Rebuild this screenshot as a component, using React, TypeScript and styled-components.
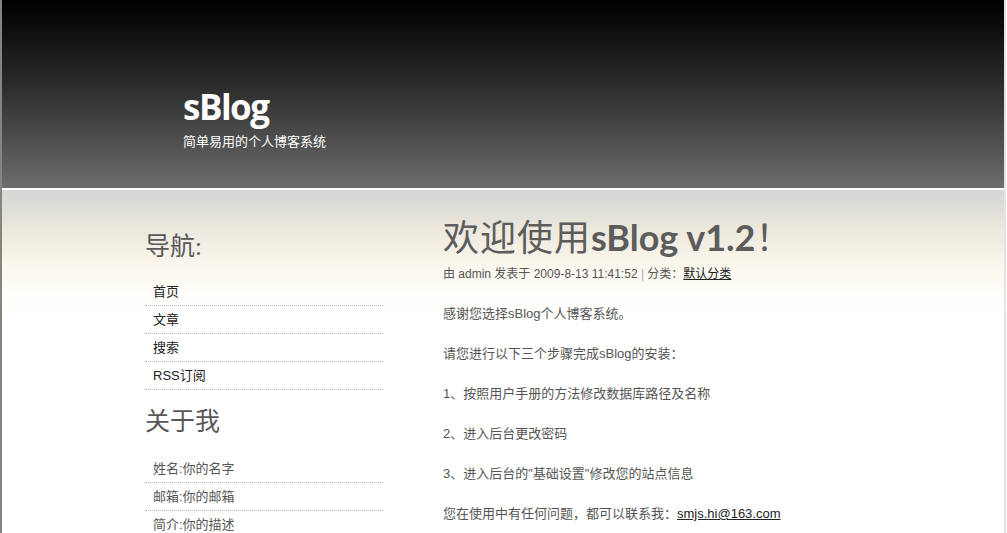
import React from 'react';
import styled, { createGlobalStyle } from 'styled-components';

const GlobalStyle = createGlobalStyle`
  html, body {
    margin: 0;
    padding: 0;
    background: #fff;
  }
  body {
    font-family: Arial, "Liberation Sans", "Noto Sans CJK SC", sans-serif;
  }
`;

const cjk = `"Liberation Sans", "Noto Sans CJK SC", sans-serif`;

const Page = styled.div`
  min-height: 533px;
  border-left: 2px solid #878479;
  border-right: 2px solid #e4e4e0;
  margin-right: 1px;
  overflow: hidden;
`;

const Header = styled.header`
  height: 190px;
  box-sizing: border-box;
  padding: 86px 0 0 181px;
  background: linear-gradient(to bottom, #000 0%, #0a0a0a 12%, #2b2b2b 45%, #6d6d6d 100%);
  border-bottom: 2px solid #fff;
`;

const Logo = styled.h1`
  margin: 0;
  font-family: "Open Sans", "Lato", sans-serif;
  font-weight: 700;
  font-size: 35px;
  line-height: 42px;
  letter-spacing: -1.5px;
  color: #fdfdfd;
`;

const Tagline = styled.div`
  margin-top: 6px;
  font-family: ${cjk};
  font-size: 13px;
  line-height: 16px;
  color: #fff;
`;

const Body = styled.div`
  display: flex;
  padding: 39px 0 0 143px;
  background: linear-gradient(to bottom, #d5d5d5 0px, #ece8dd 40px, #fbf7ed 75px, #fefdf9 105px, #fff 125px);
  min-height: 343px;
`;

const Sidebar = styled.aside`
  width: 238px;
  flex: none;
`;

const SideTitle = styled.h2<{ $gap: number; $top?: number }>`
  margin: ${(p) => p.$top ?? 0}px 0 ${(p) => p.$gap}px;
  font-family: "Liberation Serif", "Noto Sans CJK SC", serif;
  font-weight: 400;
  font-size: 25px;
  line-height: 36px;
  color: #585858;
`;

const List = styled.ul`
  list-style: none;
  margin: 0;
  padding: 0;
`;

const Item = styled.li<{ $dim?: boolean }>`
  height: 27px;
  line-height: 27px;
  padding-left: 8px;
  font-family: ${cjk};
  font-size: 13px;
  color: ${(p) => (p.$dim ? '#555' : '#222')};
  border-bottom: 1px dotted #b5b5b5;
  &:last-child {
    border-bottom: ${(p) => (p.$dim ? 'none' : '1px dotted #b5b5b5')};
  }
`;

const Main = styled.main`
  margin-left: 60px;
  flex: 1;
`;

const PostTitle = styled.h2`
  margin: -18px 0 0;
  font-size: 36px;
  line-height: 48px;
  font-weight: 400;
  color: #5c5c5c;
  font-family: "Noto Sans CJK SC", serif;
  letter-spacing: 1px;
`;

const Latin = styled.span`
  font-family: "Lato", "Open Sans", sans-serif;
  font-weight: 700;
  letter-spacing: 0;
  color: #5c5c5c;
`;

const Meta = styled.div`
  margin-top: 5px;
  font-family: ${cjk};
  font-size: 12px;
  line-height: 16px;
  color: #555;
`;

const Sep = styled.span`
  color: #aaa;
`;

const Link = styled.a`
  color: #222;
  text-decoration: underline;
`;

const Para = styled.p`
  margin: 24px 0 0;
  font-family: ${cjk};
  font-size: 13px;
  line-height: 16px;
  color: #555;
`;

const navItems = ['首页', '文章', '搜索', 'RSS订阅'];
const aboutItems = ['姓名:你的名字', '邮箱:你的邮箱', '简介:你的描述'];

export default function App() {
  return (
    <>
      <GlobalStyle />
      <Page>
        <Header>
          <Logo>sBlog</Logo>
          <Tagline>简单易用的个人博客系统</Tagline>
        </Header>
        <Body>
          <Sidebar>
            <SideTitle $gap={13}>导航:</SideTitle>
            <List>
              {navItems.map((t) => (
                <Item key={t}>{t}</Item>
              ))}
            </List>
            <SideTitle $gap={15} $top={14}>
              关于我
            </SideTitle>
            <List>
              {aboutItems.map((t) => (
                <Item key={t} $dim>
                  {t}
                </Item>
              ))}
            </List>
          </Sidebar>
          <Main>
            <PostTitle>
              欢迎使用<Latin>sBlog v1.2</Latin>！
            </PostTitle>
            <Meta>
              由 admin 发表于 2009-8-13 11:41:52 <Sep>|</Sep> 分类：<Link href="#">默认分类</Link>
            </Meta>
            <Para>感谢您选择sBlog个人博客系统。</Para>
            <Para>请您进行以下三个步骤完成sBlog的安装：</Para>
            <Para>1、按照用户手册的方法修改数据库路径及名称</Para>
            <Para>2、进入后台更改密码</Para>
            <Para>3、进入后台的"基础设置"修改您的站点信息</Para>
            <Para>
              您在使用中有任何问题，都可以联系我：<Link href="#">smjs.hi@163.com</Link>
            </Para>
          </Main>
        </Body>
      </Page>
    </>
  );
}
